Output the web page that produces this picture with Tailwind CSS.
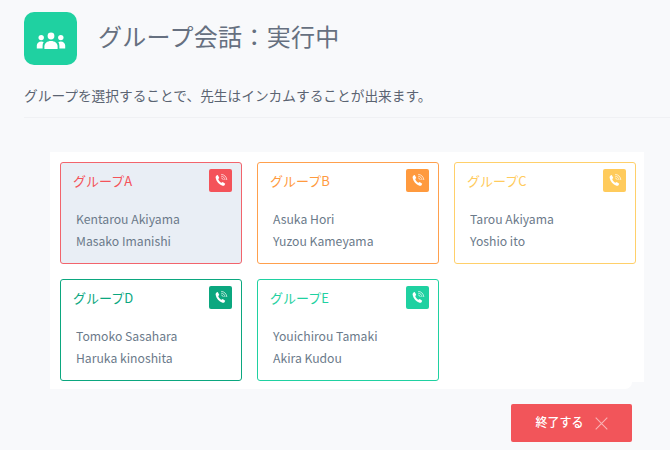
<!DOCTYPE html>
<html lang="ja">
<head>
    <meta charset="UTF-8">
    <title>グループ会話</title>
    <script src="https://cdn.jsdelivr.net/npm/@tailwindcss/browser@4"></script>
</head>
<body class="bg-[#f8f9fb] font-['Noto_Sans_CJK_JP',sans-serif] w-[670px] h-[450px] overflow-hidden">
    <!-- Header -->
    <div class="pl-6 pt-3">
        <div class="flex items-center gap-[21px]">
            <div class="w-[53px] h-[53px] rounded-[10px] bg-[#1fd1a1] flex items-center justify-center">
                <svg class="mt-[4px]" width="30" height="18" viewBox="0 0 30 18" fill="#fff">
                    <circle cx="15" cy="4" r="3.4"/>
                    <circle cx="5.2" cy="5.600" r="2.7"/>
                    <circle cx="24.8" cy="5.600" r="2.7"/>
                    <path d="M8.4 17v-2.600c0-3.200 2.800-5.400 6.600-5.400s6.600 2.200 6.600 5.400V17z"/>
                    <path d="M0.800 16.500v-3c0-2.300 1.900-4 4.400-4 1 0 1.900.2 2.600.6-.9 1-1.200 2.600-1.200 4.100v2.300z"/>
                    <path d="M29.200 16.500v-3c0-2.300-1.900-4-4.400-4-1 0-1.900.2-2.600.6.9 1 1.200 2.600 1.200 4.100v2.300z"/>
                </svg>
            </div>
            <h1 class="text-[24px] leading-[36px] text-[#667080] tracking-[0.3px] -mt-[5px]">グループ会話：実行中</h1>
        </div>
        <p class="mt-[20px] text-[13.7px] leading-[20px] text-[#5b6472]">グループを選択することで、先生はインカムすることが出来ます。</p>
        <div class="mt-[12px] border-t border-[#f0f1f4]"></div>
    </div>

    <!-- Groups -->
    <div class="relative ml-[50px] mt-[34px] w-[594px] h-[230px] bg-white">
        <div class="absolute left-0 top-[230px] w-[582px] h-[7px] bg-white rounded-br-[8px]"></div>
        <div class="relative grid grid-cols-[182px_182px_182px] gap-x-[15px] gap-y-[15px] pl-[10px] pt-[10px]">
            <div class="h-[102px] rounded-[3px] border border-[#f2646c] bg-[#e9eef5] px-[12px] pt-[6px]">
                <div class="flex justify-between items-start">
                    <span class="text-[13px] leading-[20px] mt-[2px] text-[#f4535a]">グループA</span>
                    <span class="w-[23px] h-[23px] rounded-[2px] bg-[#f4535a] flex items-center justify-center -mr-[3px]">
                        <svg width="15" height="15" viewBox="0 0 15 15" fill="none"><path d="M3.500 2.600l1.300-.5 1.500 2.800-1.100 1c.5 1.800 1.700 3.200 3.400 3.900l1.100-.9 2.500 1.800-.7 1.500c-.5.700-1.300.8-2 .5C5.900 11.500 3.400 8.700 2.600 4.800c-.1-.9.200-1.700.9-2.200z" fill="#fff"/><path d="M8.200 5c1.100.1 1.900.9 2 2M8.200 3.200c2.100.1 3.700 1.700 3.800 3.800M8.200 1.400c3.100.1 5.500 2.500 5.600 5.600" stroke="#fff" stroke-opacity=".85" stroke-width=".8"/></svg>
                    </span>
                </div>
                <div class="mt-[15.5px] pl-[3px] text-[12.2px] leading-[22px] text-[#6b7a8a]">
                    <p>Kentarou Akiyama</p>
                    <p>Masako Imanishi</p>
                </div>
            </div>
            <div class="h-[102px] rounded-[3px] border border-[#ffa04d] bg-white px-[12px] pt-[6px]">
                <div class="flex justify-between items-start">
                    <span class="text-[13px] leading-[20px] mt-[2px] text-[#ff9a3e]">グループB</span>
                    <span class="w-[23px] h-[23px] rounded-[2px] bg-[#ff9a3e] flex items-center justify-center -mr-[3px]">
                        <svg width="15" height="15" viewBox="0 0 15 15" fill="none"><path d="M3.500 2.600l1.300-.5 1.500 2.800-1.100 1c.5 1.800 1.700 3.200 3.400 3.900l1.100-.9 2.500 1.800-.7 1.500c-.5.700-1.300.8-2 .5C5.900 11.500 3.400 8.700 2.600 4.800c-.1-.9.200-1.700.9-2.200z" fill="#fff"/><path d="M8.200 5c1.100.1 1.900.9 2 2M8.200 3.200c2.100.1 3.700 1.700 3.800 3.800M8.200 1.400c3.100.1 5.500 2.500 5.600 5.600" stroke="#fff" stroke-opacity=".85" stroke-width=".8"/></svg>
                    </span>
                </div>
                <div class="mt-[15.5px] pl-[3px] text-[12.2px] leading-[22px] text-[#6b7a8a]">
                    <p>Asuka Hori</p>
                    <p>Yuzou Kameyama</p>
                </div>
            </div>
            <div class="h-[102px] rounded-[3px] border border-[#ffd06a] bg-white px-[12px] pt-[6px]">
                <div class="flex justify-between items-start">
                    <span class="text-[13px] leading-[20px] mt-[2px] text-[#ffcb5c]">グループC</span>
                    <span class="w-[23px] h-[23px] rounded-[2px] bg-[#ffcb5c] flex items-center justify-center -mr-[3px]">
                        <svg width="15" height="15" viewBox="0 0 15 15" fill="none"><path d="M3.500 2.600l1.300-.5 1.500 2.800-1.100 1c.5 1.800 1.700 3.200 3.400 3.900l1.100-.9 2.500 1.800-.7 1.500c-.5.700-1.300.8-2 .5C5.900 11.500 3.400 8.700 2.600 4.800c-.1-.9.200-1.700.9-2.200z" fill="#fff"/><path d="M8.200 5c1.100.1 1.900.9 2 2M8.200 3.200c2.100.1 3.700 1.700 3.800 3.800M8.200 1.400c3.100.1 5.500 2.500 5.600 5.600" stroke="#fff" stroke-opacity=".85" stroke-width=".8"/></svg>
                    </span>
                </div>
                <div class="mt-[15.5px] pl-[3px] text-[12.2px] leading-[22px] text-[#6b7a8a]">
                    <p>Tarou Akiyama</p>
                    <p>Yoshio ito</p>
                </div>
            </div>
            <div class="h-[102px] rounded-[3px] border border-[#0ba77f] bg-white px-[12px] pt-[6px]">
                <div class="flex justify-between items-start">
                    <span class="text-[13px] leading-[20px] mt-[2px] text-[#0ba77f]">グループD</span>
                    <span class="w-[23px] h-[23px] rounded-[2px] bg-[#0ba77f] flex items-center justify-center -mr-[3px]">
                        <svg width="15" height="15" viewBox="0 0 15 15" fill="none"><path d="M3.500 2.600l1.300-.5 1.500 2.800-1.100 1c.5 1.800 1.700 3.200 3.400 3.900l1.100-.9 2.500 1.800-.7 1.500c-.5.700-1.300.8-2 .5C5.900 11.500 3.400 8.700 2.600 4.800c-.1-.9.200-1.700.9-2.200z" fill="#fff"/><path d="M8.200 5c1.100.1 1.900.9 2 2M8.200 3.200c2.100.1 3.700 1.700 3.800 3.800M8.200 1.400c3.100.1 5.500 2.500 5.600 5.600" stroke="#fff" stroke-opacity=".85" stroke-width=".8"/></svg>
                    </span>
                </div>
                <div class="mt-[15.5px] pl-[3px] text-[12.2px] leading-[22px] text-[#6b7a8a]">
                    <p>Tomoko Sasahara</p>
                    <p>Haruka kinoshita</p>
                </div>
            </div>
            <div class="h-[102px] rounded-[3px] border border-[#1fd1a1] bg-white px-[12px] pt-[6px]">
                <div class="flex justify-between items-start">
                    <span class="text-[13px] leading-[20px] mt-[2px] text-[#1fd1a1]">グループE</span>
                    <span class="w-[23px] h-[23px] rounded-[2px] bg-[#1fd1a1] flex items-center justify-center -mr-[3px]">
                        <svg width="15" height="15" viewBox="0 0 15 15" fill="none"><path d="M3.500 2.600l1.300-.5 1.500 2.800-1.100 1c.5 1.800 1.700 3.200 3.400 3.900l1.100-.9 2.500 1.800-.7 1.500c-.5.700-1.300.8-2 .5C5.900 11.500 3.400 8.700 2.600 4.800c-.1-.9.200-1.700.9-2.200z" fill="#fff"/><path d="M8.200 5c1.100.1 1.900.9 2 2M8.200 3.200c2.100.1 3.700 1.700 3.800 3.800M8.200 1.400c3.100.1 5.500 2.500 5.600 5.600" stroke="#fff" stroke-opacity=".85" stroke-width=".8"/></svg>
                    </span>
                </div>
                <div class="mt-[15.5px] pl-[3px] text-[12.2px] leading-[22px] text-[#6b7a8a]">
                    <p>Youichirou Tamaki</p>
                    <p>Akira Kudou</p>
                </div>
            </div>
        </div>
    </div>

    <!-- Footer button -->
    <div class="flex justify-end pr-[38px] mt-[22px]">
        <button class="w-[121px] h-[38px] rounded-[2px] bg-[#f2555a] text-white text-[12px] font-medium flex items-center justify-center gap-[11px]">
            <span class="-mt-[3px]">終了する</span>
            <svg width="13" height="13" viewBox="0 0 13 13" stroke="#fff" stroke-opacity=".55" stroke-width="1.100"><path d="M.7.7l11.600 11.600M12.300.7L.7 12.300"/></svg>
        </button>
    </div>
</body>
</html>
